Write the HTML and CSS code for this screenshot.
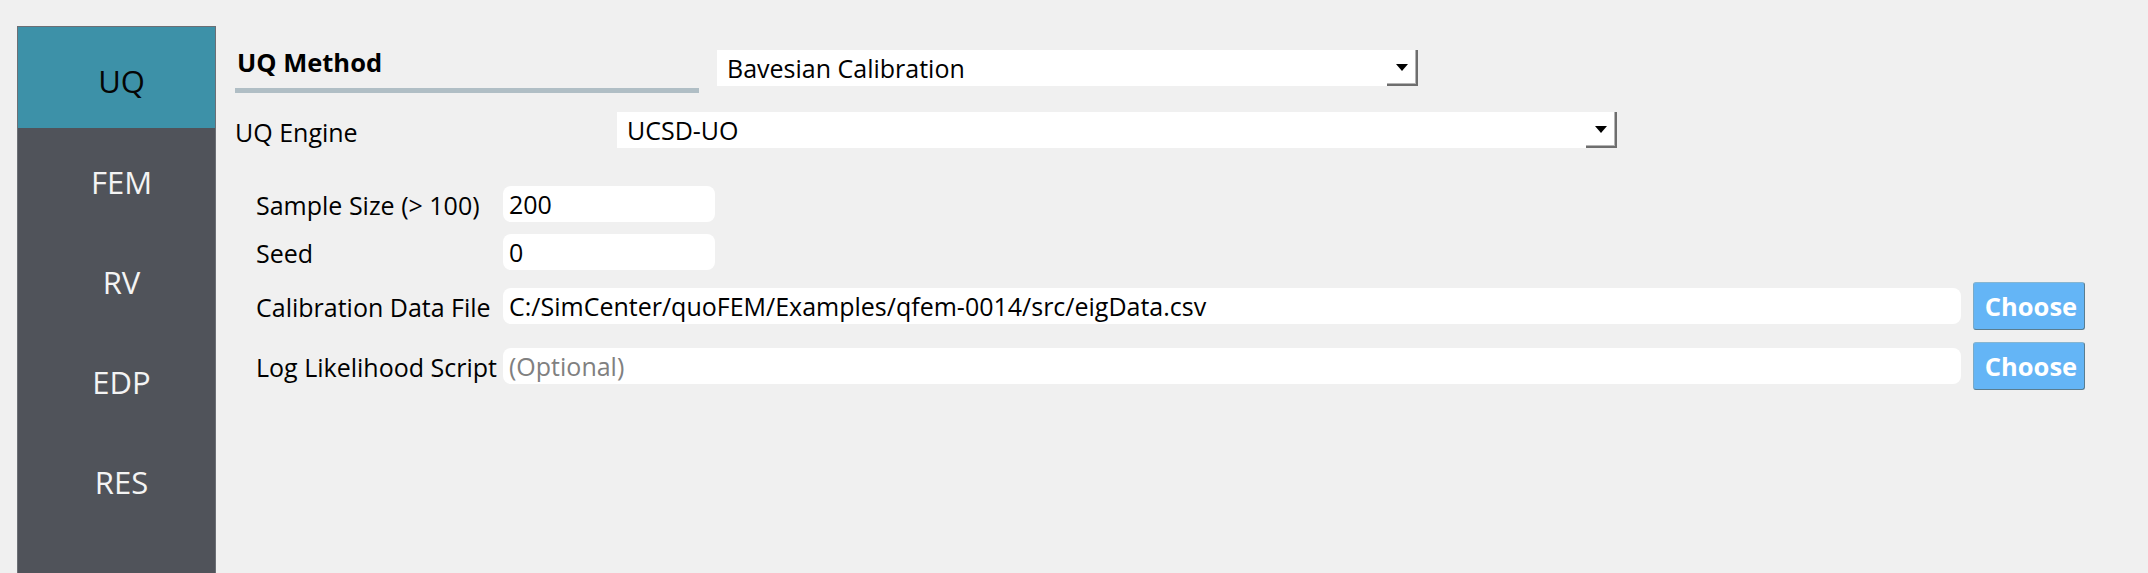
FILE: index.html
```html
<!DOCTYPE html>
<html>
<head>
<meta charset="utf-8">
<link rel="stylesheet" href="styles.css">
</head>
<body>
<div class="page">
  <nav class="sidebar">
    <div class="tab active">UQ</div>
    <div class="tab">FEM</div>
    <div class="tab">RV</div>
    <div class="tab">EDP</div>
    <div class="tab">RES</div>
  </nav>
  <main class="content">
    <div class="method-row">
      <div class="section-head">
        <div class="section-title">UQ Method</div>
        <div class="section-bar"></div>
      </div>
      <div class="combo combo-method">
        <span class="combo-text">Bavesian Calibration</span>
        <span class="combo-btn"><span class="arrow"></span></span>
      </div>
    </div>
    <div class="engine-row">
      <div class="engine-label">UQ Engine</div>
      <div class="combo combo-engine">
        <span class="combo-text">UCSD-UO</span>
        <span class="combo-btn"><span class="arrow"></span></span>
      </div>
    </div>
    <div class="form">
      <div class="form-row">
        <div class="label">Sample Size (&gt; 100)</div>
        <div class="field short">200</div>
      </div>
      <div class="form-row">
        <div class="label">Seed</div>
        <div class="field short">0</div>
      </div>
      <div class="form-row tall">
        <div class="label">Calibration Data File</div>
        <div class="field wide">C:/SimCenter/quoFEM/Examples/qfem-0014/src/eigData.csv</div>
        <button class="choose">Choose</button>
      </div>
      <div class="form-row tall">
        <div class="label">Log Likelihood Script</div>
        <div class="field wide placeholder">(Optional)</div>
        <button class="choose">Choose</button>
      </div>
    </div>
  </main>
</div>
</body>
</html>
```

FILE: styles.css
```css
* { box-sizing: border-box; }
html, body {
  margin: 0;
  padding: 0;
  background: #f0f0f0;
  font-family: "Open Sans", "Noto Sans", sans-serif;
  color: #000;
}
.page {
  display: flex;
  width: 2148px;
  height: 573px;
  overflow: hidden;
}
.sidebar {
  margin-top: 26px;
  margin-left: 17px;
  width: 199px;
  height: 560px;
  background: #50535a;
  border: 1px solid #6c6f75;
  display: flex;
  flex-direction: column;
}
.tab {
  height: 100px;
  padding-top: 8px;
  padding-left: 10px;
  line-height: 92px;
  font-size: 31px;
  text-align: center;
  color: #f4f4f4;
}
.tab.active {
  background: #3d91a8;
  color: #050505;
  height: 101px;
}
.content {
  flex: 1;
  margin-left: 19px;
  padding-top: 45px;
  padding-right: 63px;
  display: flex;
  flex-direction: column;
  font-size: 25px;
}
.method-row {
  display: flex;
  align-items: flex-start;
}
.section-head {
  width: 464px;
  display: flex;
  flex-direction: column;
}
.section-title {
  font-weight: 700;
  font-size: 25.5px;
  line-height: 34px;
  padding-left: 2px;
  margin-bottom: 9px;
}
.section-bar {
  height: 5px;
  background: #b0bec5;
}
.combo {
  height: 36px;
  background: #fff;
  display: flex;
  align-items: stretch;
}
.combo-method {
  width: 701px;
  margin-left: 18px;
  margin-top: 5px;
}
.combo-engine {
  width: 1000px;
}
.combo-text {
  flex: 1;
  line-height: 36px;
  padding-left: 10px;
  white-space: nowrap;
  overflow: hidden;
}
.combo-btn {
  width: 31px;
  border-right: 2px solid #6e6e6e;
  border-bottom: 2px solid #6e6e6e;
  box-shadow: inset -1px -1px 0 #b4b4b4;
  display: flex;
  align-items: center;
  justify-content: center;
}
.arrow {
  width: 0;
  height: 0;
  border-left: 6px solid transparent;
  border-right: 6px solid transparent;
  border-top: 7px solid #000;
  margin-left: 0;
}
.engine-row {
  display: flex;
  margin-top: 19px;
}
.engine-label {
  width: 382px;
  line-height: 36px;
  padding-top: 2px;
}
.form {
  margin-top: 36px;
  padding-left: 21px;
  display: flex;
  flex-direction: column;
  gap: 12px;
}
.form-row {
  display: flex;
  align-items: center;
  height: 36px;
}
.form-row.tall {
  height: 48px;
}
.label {
  width: 247px;
  line-height: 36px;
  padding-top: 1px;
  white-space: nowrap;
}
.field {
  height: 36px;
  background: #fff;
  border-radius: 8px;
  line-height: 36px;
  padding-left: 6px;
  white-space: nowrap;
  overflow: hidden;
}
.field.short { width: 212px; }
.field.wide { flex: 1; }
.field.placeholder { color: #808080; }
.choose {
  margin-left: 12px;
  width: 112px;
  height: 48px;
  background: #64b5f6;
  border: 1px solid #5a7d90;
  border-top-color: #86b6d2;
  border-left-color: #7aaac8;
  border-radius: 3px;
  color: #fff;
  font-family: "Open Sans", "Noto Sans", sans-serif;
  font-weight: 700;
  font-size: 25.5px;
  line-height: 44px;
  padding: 0 0 0 4px;
  text-align: center;
}
```
